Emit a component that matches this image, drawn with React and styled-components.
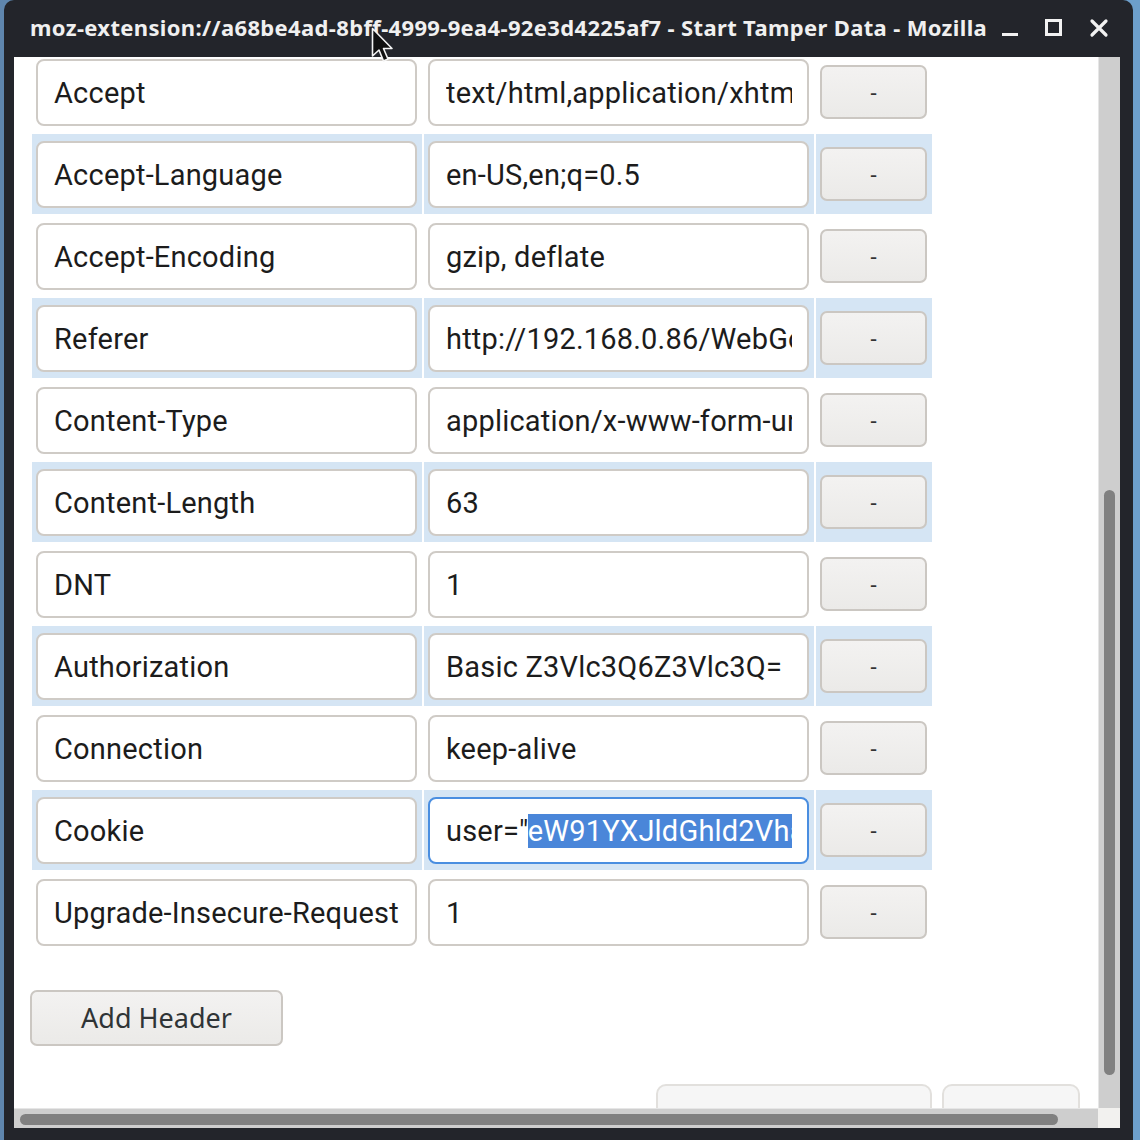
import React from "react"
import styled, {createGlobalStyle} from "styled-components"

const headers = [
    {name: "Accept", value: "text/html,application/xhtml+xml,application/xml;q=0.9,*/*;q=0.8"},
    {name: "Accept-Language", value: "en-US,en;q=0.5"},
    {name: "Accept-Encoding", value: "gzip, deflate"},
    {name: "Referer", value: "http://192.168.0.86/WebGoat/attack?Screen=105&menu=200"},
    {name: "Content-Type", value: "application/x-www-form-urlencoded"},
    {name: "Content-Length", value: "63"},
    {name: "DNT", value: "1"},
    {name: "Authorization", value: "Basic Z3Vlc3Q6Z3Vlc3Q="},
    {name: "Connection", value: "keep-alive"},
    {name: "Cookie", value: 'user="', selected: 'eW91YXJldGhld2Vha2VzdGxpbms="', focused: true},
    {name: "Upgrade-Insecure-Request", value: "1"},
]

const App = () => {
    return (
        <>
            <GlobalStyle/>
            <Desktop>
                <Window>
                    <TitleBar>
                        <Title>moz-extension://a68be4ad-8bff-4999-9ea4-92e3d4225af7 - Start Tamper Data - Mozilla</Title>
                        <WindowButtons>
                            <Minimize/>
                            <Maximize/>
                            <CloseIcon viewBox="0 0 20 20">
                                <path d="M3 3 L17 17 M17 3 L3 17" stroke="#f2f2f2" strokeWidth="3.2" strokeLinecap="round"/>
                            </CloseIcon>
                        </WindowButtons>
                        <Cursor viewBox="0 0 24 38">
                            <path d="M1.5 1.5 L1.5 29 L8 23 L12.5 34 L17 32 L12.5 21.5 L21 21.5 Z"
                                  fill="#111" stroke="#f4f4f4" strokeWidth="1.6" strokeLinejoin="round"/>
                        </Cursor>
                    </TitleBar>
                    <Body>
                        <Viewport>
                            <Content>
                                <HeaderList>
                                    {headers.map((h, i) => (
                                        <Row key={h.name}>
                                            <Cell $alt={i % 2 === 1}>
                                                <Field>
                                                    <FieldText>{h.name}</FieldText>
                                                </Field>
                                            </Cell>
                                            <Cell $alt={i % 2 === 1}>
                                                <Field $focused={h.focused}>
                                                    <FieldText>
                                                        {h.value}
                                                        {h.selected && <Selection>{h.selected}</Selection>}
                                                    </FieldText>
                                                </Field>
                                            </Cell>
                                            <Cell $alt={i % 2 === 1}>
                                                <RemoveButton>-</RemoveButton>
                                            </Cell>
                                        </Row>
                                    ))}
                                </HeaderList>
                                <AddButton>Add Header</AddButton>
                                <Footer>
                                    <FooterButton $width={276}/>
                                    <FooterButton $width={138}/>
                                </Footer>
                            </Content>
                        </Viewport>
                        <VScroll>
                            <VThumb/>
                        </VScroll>
                        <HScroll>
                            <HThumb/>
                        </HScroll>
                        <Corner/>
                    </Body>
                </Window>
            </Desktop>
        </>
    )
}

export default App

const GlobalStyle = createGlobalStyle`
  html, body {
    margin: 0;
    padding: 0;
  }
  body {
    width: 1140px;
    height: 1140px;
    overflow: hidden;
    font-family: Roboto, "Noto Sans", sans-serif;
  }
`
const Desktop = styled.div`
  width: 1140px;
  height: 1140px;
  background: linear-gradient(90deg, #5f86ae 0, #5f86ae 50%, #6d9fcb 50%, #6d9fcb 100%);
  padding-left: 4px;
  box-sizing: border-box;
`
const Window = styled.div`
  width: 1129px;
  height: 1140px;
  background: #23252b;
  border-radius: 10px 10px 0 0;
  display: flex;
  flex-direction: column;
`
const TitleBar = styled.div`
  position: relative;
  height: 57px;
  flex-shrink: 0;
  display: flex;
  align-items: center;
  padding: 0 24px 0 26px;
  box-sizing: border-box;
`
const Title = styled.div`
  flex: 1;
  min-width: 0;
  font-family: "Noto Sans", sans-serif;
  font-weight: 700;
  font-size: 22px;
  letter-spacing: 0.35px;
  color: #f0f0f0;
  white-space: nowrap;
  overflow: hidden;
  padding-bottom: 4px;
`
const WindowButtons = styled.div`
  display: flex;
  align-items: center;
  gap: 27px;
  padding-bottom: 2px;
`
const Minimize = styled.div`
  width: 16px;
  height: 3px;
  background: #f2f2f2;
  margin-top: 14px;
`
const Maximize = styled.div`
  width: 11px;
  height: 11px;
  border: 3px solid #f2f2f2;
`
const CloseIcon = styled.svg`
  width: 20px;
  height: 20px;
`
const Cursor = styled.svg`
  position: absolute;
  left: 367px;
  top: 27px;
  width: 24px;
  height: 38px;
  z-index: 5;
`
const Body = styled.div`
  flex: 1;
  margin: 0 13px 12px 10px;
  display: grid;
  grid-template-columns: 1fr 22px;
  grid-template-rows: 1fr 20px;
  overflow: hidden;
  min-height: 0;
`
const Viewport = styled.div`
  background: #fff;
  overflow: hidden;
  min-height: 0;
  min-width: 0;
`
const Content = styled.div`
  margin-top: -7px;
  padding-left: 16px;
`
const HeaderList = styled.div`
  display: flex;
  flex-direction: column;
  gap: 2px;
  padding: 2px;
`
const Row = styled.div`
  display: grid;
  grid-template-columns: 390px 390px 116px;
  gap: 2px;
`
const Cell = styled.div`
  height: 80px;
  min-width: 0;
  display: flex;
  align-items: center;
  padding: 0 5px 0 4px;
  background: ${({$alt}) => ($alt ? "#d5e5f4" : "transparent")};
`
const Field = styled.div`
  flex: 1;
  min-width: 0;
  height: 67px;
  box-sizing: border-box;
  border: 2px solid ${({$focused}) => ($focused ? "#4a8ee0" : "#cfcbc6")};
  border-radius: 8px;
  background: #fff;
  display: flex;
  align-items: center;
  padding: 0 15px 0 16px;
  margin-top: 1px;
`
const FieldText = styled.div`
  flex: 1;
  min-width: 0;
  overflow: hidden;
  white-space: nowrap;
  font-family: Roboto, sans-serif;
  font-size: 29px;
  letter-spacing: 0.2px;
  color: #1c1c1c;
  line-height: 36px;
`
const Selection = styled.span`
  background: #4a86d9;
  color: #fff;
`
const RemoveButton = styled.div`
  width: 107px;
  height: 54px;
  box-sizing: border-box;
  border: 2px solid #cbc7c2;
  border-radius: 7px;
  background: linear-gradient(#f3f2f1, #ebeae8);
  display: flex;
  align-items: center;
  justify-content: center;
  font-family: "Noto Sans", sans-serif;
  font-size: 22px;
  color: #333;
  padding-bottom: 3px;
`
const AddButton = styled.div`
  margin-top: 36px;
  width: 253px;
  height: 56px;
  box-sizing: border-box;
  border: 2px solid #cbc7c2;
  border-radius: 7px;
  background: linear-gradient(#f3f2f1, #ebeae8);
  display: flex;
  align-items: center;
  justify-content: center;
  font-family: "Noto Sans", sans-serif;
  font-size: 27px;
  color: #2f3436;
  padding-bottom: 2px;
`
const Footer = styled.div`
  display: flex;
  gap: 10px;
  margin-top: 38px;
  padding-left: 626px;
`
const FooterButton = styled.div`
  width: ${({$width}) => $width}px;
  height: 56px;
  box-sizing: border-box;
  border: 2px solid #e2e0dd;
  border-radius: 10px;
  background: #f6f6f6;
`
const VScroll = styled.div`
  background: #cecece;
  border-left: 1px solid #e6e6e6;
  position: relative;
`
const VThumb = styled.div`
  position: absolute;
  left: 5px;
  top: 433px;
  width: 11px;
  height: 585px;
  border-radius: 6px;
  background: #808080;
`
const HScroll = styled.div`
  background: #cecece;
  border-top: 1px solid #e6e6e6;
  position: relative;
`
const HThumb = styled.div`
  position: absolute;
  left: 6px;
  top: 5px;
  width: 1038px;
  height: 11px;
  border-radius: 6px;
  background: #808080;
`
const Corner = styled.div`
  background: #f2f1ef;
`
